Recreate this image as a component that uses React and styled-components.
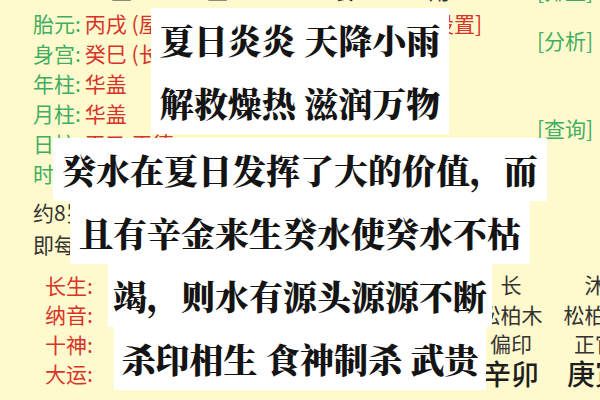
import React from "react";
import styled, { createGlobalStyle } from "styled-components";

const GlobalStyle = createGlobalStyle`
  html, body {
    margin: 0;
    padding: 0;
    overflow: hidden;
    background: #fffacd;
  }
  body {
    font-family: "Noto Sans CJK SC", "Noto Sans", sans-serif;
  }
`;

const Screen = styled.div`
  position: relative;
  width: 600px;
  height: 400px;
  overflow: hidden;
  background: #fffacd;
`;

const Page = styled.div`
  display: flex;
  margin-top: -25px;
`;

const Main = styled.div`
  flex: 1;
  min-width: 0;
  padding-left: 33px;
`;

const Header = styled.div`
  display: grid;
  grid-template-columns: 96px 127px 95px auto;
  padding-left: 78px;
  height: 33px;
  line-height: 30px;
  font-size: 21px;
  color: #333;
`;

const InfoRow = styled.div`
  display: flex;
  align-items: center;
  height: 30px;
  font-size: 21px;
  white-space: nowrap;
`;

const Label = styled.span`
  color: ${(p) => (p.red ? "#d8332a" : "#3fae62")};
`;

const Value = styled.span`
  color: #d8332a;
  margin-left: 4px;
`;

const SetLink = styled.span`
  color: #d8332a;
  margin-left: auto;
  margin-right: 55px;
`;

const Note = styled.div`
  height: 32px;
  line-height: 32px;
  font-size: 21px;
  color: #333;
  white-space: nowrap;
  margin-top: ${(p) => p.top || 0}px;
`;

const Pillars = styled.div`
  display: grid;
  grid-template-columns: 88px repeat(6, 84px);
  grid-auto-rows: 29.5px;
  margin: 10px 0 0 12px;
  font-size: 21px;
  align-items: center;
  white-space: nowrap;
`;

const Cell = styled.span`
  text-align: center;
  color: #333;
  font-size: ${(p) => (p.big ? 28 : 21)}px;
  font-weight: ${(p) => (p.big ? 500 : 400)};
  color: ${(p) => (p.big ? "#1e1e1e" : "#333")};
  line-height: 29.5px;
`;

const Side = styled.div`
  width: 63px;
  display: flex;
  flex-direction: column;
`;

const SideLink = styled.span`
  color: #3fae62;
  font-size: 21px;
  line-height: 30px;
  white-space: nowrap;
  margin-top: ${(p) => p.top || 0}px;
`;

const Captions = styled.div`
  position: absolute;
  top: 8px;
  left: 0;
  right: 0;
  display: flex;
  flex-direction: column;
  align-items: center;
`;

const CaptionGroup = styled.div`
  display: flex;
  flex-direction: column;
  align-items: center;
  margin-top: ${(p) => p.gap || 0}px;
`;

const CaptionLine = styled.span`
  display: block;
  background: #ffffff;
  padding: 0 ${(p) => p.pad ?? 9}px;
  line-height: 63px;
  font-family: "Noto Serif CJK SC", "Noto Sans CJK SC", serif;
  font-size: 34px;
  font-weight: 900;
  color: #141414;
  white-space: nowrap;
`;

const info = [
  { label: "胎元:", value: "丙戌 (屋上土)", link: "[设置]" },
  { label: "身宫:", value: "癸巳 (长流水)" },
  { label: "年柱:", value: "华盖" },
  { label: "月柱:", value: "华盖" },
  { label: "日柱:", value: "天乙 天德" },
  { label: "时柱:", value: "驿马 文昌" },
];

const pillarRows = [
  { label: "长生:", cells: ["养", "帝旺", "冠带", "衰", "长", "沐"] },
  { label: "纳音:", cells: ["屋上土", "长流水", "金箔金", "剑锋金", "松柏木", "松柏木"] },
  { label: "十神:", cells: ["正财", "伤官", "日主", "食神", "偏印", "正官"] },
  { label: "大运:", cells: ["甲午", "癸巳", "壬辰", "壬辰", "辛卯", "庚寅"], big: true },
];

const captions = [
  { gap: 0, lines: [{ text: "夏日炎炎 天降小雨" }, { text: "解救燥热 滋润万物" }] },
  {
    gap: 4,
    lines: [
      { text: "癸水在夏日发挥了大的价值，而" },
      { text: "且有辛金来生癸水使癸水不枯" },
    ],
  },
  {
    gap: 0,
    lines: [
      { text: "竭，则水有源头源源不断", pad: 5 },
      { text: "杀印相生 食神制杀 武贵", pad: 8 },
    ],
  },
];

export default function App() {
  return (
    <Screen>
      <GlobalStyle />
      <Page>
        <Main>
          <Header>
            <span>坐</span>
            <span>坐</span>
            <span>食</span>
            <span>用</span>
          </Header>
          {info.map((row) => (
            <InfoRow key={row.label}>
              <Label>{row.label}</Label>
              <Value>{row.value}</Value>
              {row.link && <SetLink>{row.link}</SetLink>}
            </InfoRow>
          ))}
          <Note top={8}>约8岁上运，公历2029年交运</Note>
          <Note>即每逢甲、己年立春后交大运</Note>
          <Pillars>
            {pillarRows.map((row) => (
              <React.Fragment key={row.label}>
                <Label red>{row.label}</Label>
                {row.cells.map((c, i) => (
                  <Cell key={i} big={row.big}>
                    {c}
                  </Cell>
                ))}
              </React.Fragment>
            ))}
          </Pillars>
        </Main>
        <Side>
          <SideLink>[排盘]</SideLink>
          <SideLink top={20}>[分析]</SideLink>
          <SideLink top={58}>[查询]</SideLink>
        </Side>
      </Page>
      <Captions>
        {captions.map((g, gi) => (
          <CaptionGroup key={gi} gap={g.gap}>
            {g.lines.map((l) => (
              <CaptionLine key={l.text} pad={l.pad}>
                {l.text}
              </CaptionLine>
            ))}
          </CaptionGroup>
        ))}
      </Captions>
    </Screen>
  );
}
